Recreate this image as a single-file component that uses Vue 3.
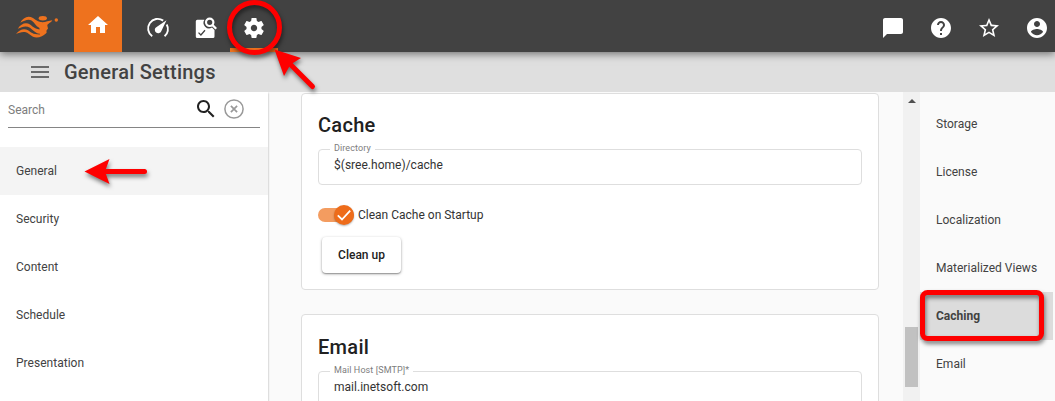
<script setup>
const sections = ['General', 'Security', 'Content', 'Schedule', 'Presentation']
const anchors = ['Storage', 'License', 'Localization', 'Materialized Views', 'Caching', 'Email']
</script>

<template>
  <div class="app">
    <header class="topbar">
      <svg class="logo" width="46" height="28" viewBox="14 13 46 28" fill="#ee721e">
        <ellipse cx="42.800" cy="18.300" rx="4.100" ry="2.200" />
        <circle cx="56.300" cy="20" r="1.700" />
        <path d="M20.300 22.800C23 17.500 28 15 33 18C36 20 38 22 42 22.300V28.500C36 27.500 35 22.500 31.500 20.400C28 18.800 24.500 20.500 20.300 22.800Z" />
        <path d="M17.800 28.700C21 23.500 26 21.900 30 24.500C33 26.700 35 29.300 42 29.600V34C36 34 33 30 30 27.700C26 25.200 22 26.700 17.800 28.700Z" />
        <path d="M16 34C19.500 29.500 24 28.200 28 30.300C31 32.300 33 34.700 40 34.500L46.500 32.500C43 37 37 38.500 33 36.800C29.500 35 28.500 32.700 25 32.100C21.500 31.600 19 33 16 34Z" />
        <path d="M39 21.700C44 23.300 48 20.600 52.300 20.300C51 23 47.500 23.500 47.300 25.500L48 28.500L46.500 30.500V33L40 36Z" />
      </svg>
      <nav class="tabs">
        <a class="tab home"><svg width="24" height="24" viewBox="0 0 24 24"><path d="M10 20v-6h4v6h5v-8h3L12 3 2 12h3v8z" /></svg></a>
        <a class="tab gauge">
          <svg width="24" height="24" viewBox="0 0 24 24">
            <path d="M6.200 20.300A9.200 9.200 0 0 1 17.200 4.600M20.700 8.600A9.200 9.200 0 0 1 18.600 20.300" fill="none" stroke="#fff" stroke-width="1.900" />
            <path d="M20.500 4.300L15.500 14.700A3.400 3.400 0 1 1 10.600 10.900Z" />
          </svg>
        </a>
        <a class="tab">
          <svg width="24" height="24" viewBox="0 0 24 24">
            <path d="M3.300 3.800H10.400A5.600 5.600 0 0 0 18 11.600L20.500 14V20.500Q20.500 22 19 22H3.300Q1.800 22 1.800 20.500V5.300Q1.800 3.800 3.300 3.800Z" />
            <circle cx="15.700" cy="6.300" r="3.700" fill="none" stroke="#fff" stroke-width="2.200" />
            <path d="M18.300 8.900L22.200 12.800" stroke="#fff" stroke-width="2.200" />
            <path d="M4.500 16.600L6.900 19L11 14.300" fill="none" stroke="#424242" stroke-width="1.300" />
          </svg>
        </a>
        <a class="tab active">
          <svg width="24" height="24" viewBox="0 0 24 24"><path d="M19.430 12.980c.04-.32.07-.64.07-.98s-.03-.66-.07-.98l2.110-1.650c.19-.15.24-.42.12-.64l-2-3.460c-.12-.22-.39-.3-.61-.22l-2.490 1c-.52-.4-1.080-.73-1.690-.98l-.38-2.650C14.460 2.180 14.250 2 14 2h-4c-.25 0-.46.18-.49.42l-.38 2.650c-.61.25-1.170.59-1.690.98l-2.490-1c-.23-.09-.49 0-.61.22l-2 3.460c-.13.22-.07.49.12.64l2.110 1.650c-.04.32-.07.65-.07.98s.03.66.07.98l-2.110 1.650c-.19.15-.24.42-.12.64l2 3.460c.12.22.39.3.61.22l2.490-1c.52.4 1.080.73 1.690.98l.38 2.650c.03.24.24.42.49.42h4c.25 0 .46-.18.49-.42l.38-2.650c.61-.25 1.170-.59 1.690-.98l2.490 1c.23.09.49 0 .61-.22l2-3.460c.12-.22.07-.49-.12-.64l-2.110-1.650zM12 15.200c-1.770 0-3.200-1.430-3.200-3.200s1.430-3.200 3.200-3.200 3.200 1.430 3.200 3.200-1.430 3.200-3.200 3.200z" /></svg>
        </a>
      </nav>
      <div class="tools">
        <svg width="24" height="24" viewBox="0 0 24 24"><path d="M20 2H4c-1.100 0-2 .9-2 2v18l4-4h14c1.100 0 2-.9 2-2V4c0-1.100-.9-2-2-2z" /></svg>
        <svg width="24" height="24" viewBox="0 0 24 24"><path d="M12 2C6.480 2 2 6.480 2 12s4.480 10 10 10 10-4.480 10-10S17.520 2 12 2zm1 17h-2v-2h2v2zm2.070-7.750l-.9.920C13.450 12.900 13 13.500 13 15h-2v-.5c0-1.100.45-2.100 1.170-2.830l1.240-1.260c.37-.36.59-.86.59-1.410 0-1.100-.9-2-2-2s-2 .9-2 2H8c0-2.210 1.790-4 4-4s4 1.790 4 4c0 .88-.36 1.680-.93 2.250z" /></svg>
        <svg width="24" height="24" viewBox="0 0 24 24"><path d="M22 9.240l-7.190-.62L12 2 9.190 8.630 2 9.240l5.460 4.730L5.820 21 12 17.270 18.180 21l-1.630-7.030L22 9.240zM12 15.400l-3.760 2.270 1-4.280-3.320-2.880 4.380-.38L12 6.100l1.710 4.040 4.380.38-3.320 2.880 1 4.280L12 15.400z" /></svg>
        <svg width="24" height="24" viewBox="0 0 24 24"><path d="M12 2C6.480 2 2 6.480 2 12s4.480 10 10 10 10-4.480 10-10S17.520 2 12 2zm0 3c1.660 0 3 1.340 3 3s-1.340 3-3 3-3-1.340-3-3 1.340-3 3-3zm0 14.200c-2.500 0-4.710-1.280-6-3.220.03-1.990 4-3.080 6-3.080 1.990 0 5.970 1.090 6 3.080-1.290 1.940-3.500 3.220-6 3.220z" /></svg>
      </div>
    </header>

    <div class="titlebar">
      <svg width="24" height="24" viewBox="0 0 24 24" fill="#6a6a6a"><path d="M3 18h18v-2H3v2zm0-5h18v-2H3v2zm0-7v2h18V6H3z" /></svg>
      <h1>General Settings</h1>
    </div>

    <div class="body">
      <aside class="sidebar">
        <div class="search">
          <span>Search</span>
          <svg class="find" width="24" height="24" viewBox="0 0 24 24" fill="#222"><path d="M15.500 14h-.79l-.28-.27C15.410 12.590 16 11.110 16 9.500 16 5.910 13.090 3 9.500 3S3 5.910 3 9.500 5.910 16 9.500 16c1.610 0 3.090-.59 4.230-1.570l.27.28v.79l5 4.990L20.490 19l-4.990-5zm-6 0C7.010 14 5 11.990 5 9.500S7.010 5 9.500 5 14 7.010 14 9.500 11.990 14 9.500 14z" /></svg>
          <svg width="20" height="20" viewBox="0 0 20 20" fill="none" stroke="#999"><circle cx="10" cy="10" r="9.100" stroke-width="1.500" /><path d="M6.900 6.900L13.100 13.100M13.100 6.900L6.900 13.100" stroke-width="1.700" /></svg>
        </div>
        <ul class="menu">
          <li v-for="s in sections" :key="s" :class="{ current: s === 'General' }">{{ s }}</li>
        </ul>
      </aside>

      <main class="content">
        <section class="card cache">
          <h2>Cache</h2>
          <fieldset><legend>Directory</legend><div class="value">$(sree.home)/cache</div></fieldset>
          <div class="toggle">
            <span class="switch"><span class="knob"><svg width="20" height="20" viewBox="0 0 20 20"><path d="M3.800 10.300L8 14.500L16.200 5.700" fill="none" stroke="#fff" stroke-width="1.800" /></svg></span></span>
            <span>Clean Cache on Startup</span>
          </div>
          <button>Clean up</button>
        </section>
        <section class="card email">
          <h2>Email</h2>
          <fieldset><legend>Mail Host [SMTP]*</legend><div class="value">mail.inetsoft.com</div></fieldset>
        </section>
      </main>

      <div class="scrollbar"><i class="up"></i><i class="thumb"></i></div>

      <ul class="toc">
        <li v-for="a in anchors" :key="a" :class="{ current: a === 'Caching' }">{{ a }}</li>
      </ul>
    </div>

    <svg class="marks" width="1055" height="401" viewBox="0 0 1055 401">
      <circle cx="254.500" cy="27.500" r="25" fill="none" stroke="#fe0000" stroke-width="5" />
      <path d="M312.500 86.500L290 64" stroke="#fe0000" stroke-width="5" stroke-linecap="round" />
      <path d="M274.500 49.500L301 58L290.500 64.500L284 76Z" fill="#fe0000" />
      <path d="M144.500 171.500H106" stroke="#fe0000" stroke-width="5" stroke-linecap="round" />
      <path d="M84.500 171.500L109.500 159L105 171.500L109.500 184Z" fill="#fe0000" />
      <rect x="922.500" y="292.500" width="119" height="46" rx="5" fill="none" stroke="#fe0000" stroke-width="5" />
    </svg>
  </div>
</template>

<style>
body { margin: 0; overflow: hidden; }
</style>

<style scoped>
.app {
  position: relative;
  width: 1055px;
  height: 401px;
  overflow: hidden;
  display: flex;
  flex-direction: column;
  background: #fafafa;
  font: 12px/16px Roboto, "Liberation Sans", sans-serif;
  color: #424242;
}
svg { display: block; flex: none; }
ul { list-style: none; margin: 0; padding: 0; }
h1, h2 { margin: 0; font-weight: 500; }

.topbar {
  flex: none;
  height: 52px;
  box-sizing: border-box;
  display: flex;
  padding: 0 6px 0 14px;
  background: #424242;
  box-shadow: 0 2px 8px rgba(0, 0, 0, .5);
  z-index: 2;
  fill: #fff;
}
.logo { margin-top: 13px; }
.tabs { display: flex; margin-left: 14px; }
.tab { width: 48px; box-sizing: border-box; padding: 16px 12px 0; border-bottom: 4px solid transparent; }
.tab.home { padding-top: 13px; background: #ee721e; border-color: #ee721e; }
.tab.gauge { margin-left: 12px; }
.tab.active { border-color: #ee721e; }
.tools { display: flex; gap: 24px; margin: 16px 0 0 auto; }

.titlebar {
  flex: none;
  height: 40px;
  display: flex;
  align-items: center;
  gap: 12px;
  padding-left: 28px;
  background: #dfdfdf;
}
.titlebar h1 { font-size: 20px; line-height: 28px; letter-spacing: .25px; }

.body { flex: 1; min-height: 0; display: flex; }
.sidebar { width: 268px; background: #fff; box-shadow: 0 1px 2px rgba(0, 0, 0, .35); clip-path: inset(0 -4px 0 0); }
.search {
  display: flex;
  align-items: center;
  height: 35px;
  margin: 0 8px 19px;
  border-bottom: 1px solid #858585;
  color: #7d7d7d;
}
.search .find { margin: 0 6px 0 auto; }
.search svg { position: relative; top: -1px; }
.search svg:last-child { margin-right: 16px; }
.menu li, .toc li { height: 48px; line-height: 48px; padding-left: 16px; letter-spacing: .02px; }

.menu .current { background: #f4f4f4; }

.content { flex: 1; padding: 1px 24px 0 33px; display: flex; flex-direction: column; gap: 24px; }
.card { flex: none; box-sizing: border-box; border: 1px solid #dedede; border-radius: 4px; background: #fff; padding: 15px 16px; }
.cache { height: 197px; }
.email { height: 197px; padding-top: 16px; }
.card h2 { font-size: 20px; line-height: 32px; letter-spacing: .3px; color: #212121; }
fieldset {
  margin: 0;
  height: 44px;
  box-sizing: border-box;
  border: 1px solid #dedede;
  border-radius: 4px;
  padding: 0 15px;
}
legend { margin-left: -4px; padding: 0 4px 2px; font-size: 9px; line-height: 14px; letter-spacing: .1px; color: #7d7d7d; }
.value { line-height: 16px; color: #333; letter-spacing: .02px; }
.toggle { display: flex; align-items: center; gap: 4px; height: 20px; margin-top: 20px; color: #333; }
.switch { width: 36px; height: 14px; border-radius: 7px; background: #f39c60; }
.knob { display: block; width: 20px; height: 20px; margin: -3px 0 0 16px; border-radius: 50%; background: #ee6c1a; box-shadow: 0 1px 2px rgba(0, 0, 0, .3); }
button {
  display: block;
  width: 79px;
  height: 36px;
  margin: 12px 0 0 4px;
  padding: 0;
  border: 0;
  border-radius: 4px;
  background: #fff;
  box-shadow: 0 1px 3px rgba(0, 0, 0, .35), 0 1px 1px rgba(0, 0, 0, .2);
  font: 500 12px Roboto, sans-serif;
  color: #212121;
}

.scrollbar { width: 17px; background: #f1f1f1; display: flex; flex-direction: column; align-items: center; }
.up { margin-top: 7px; border: 4px solid transparent; border-top: 0; border-bottom-color: #505050; }
.thumb { width: 13px; height: 60px; margin-top: 224px; background: #c1c1c1; }

.toc { width: 135px; padding-top: 8px; box-sizing: border-box; }
.toc li { margin-right: 2px; white-space: nowrap; }
.toc .current { background: #dcdcdc; font-weight: 700; }

.marks { position: absolute; inset: 0; z-index: 3; filter: drop-shadow(1px 3px 2px rgba(0, 0, 0, .5)); }
</style>
